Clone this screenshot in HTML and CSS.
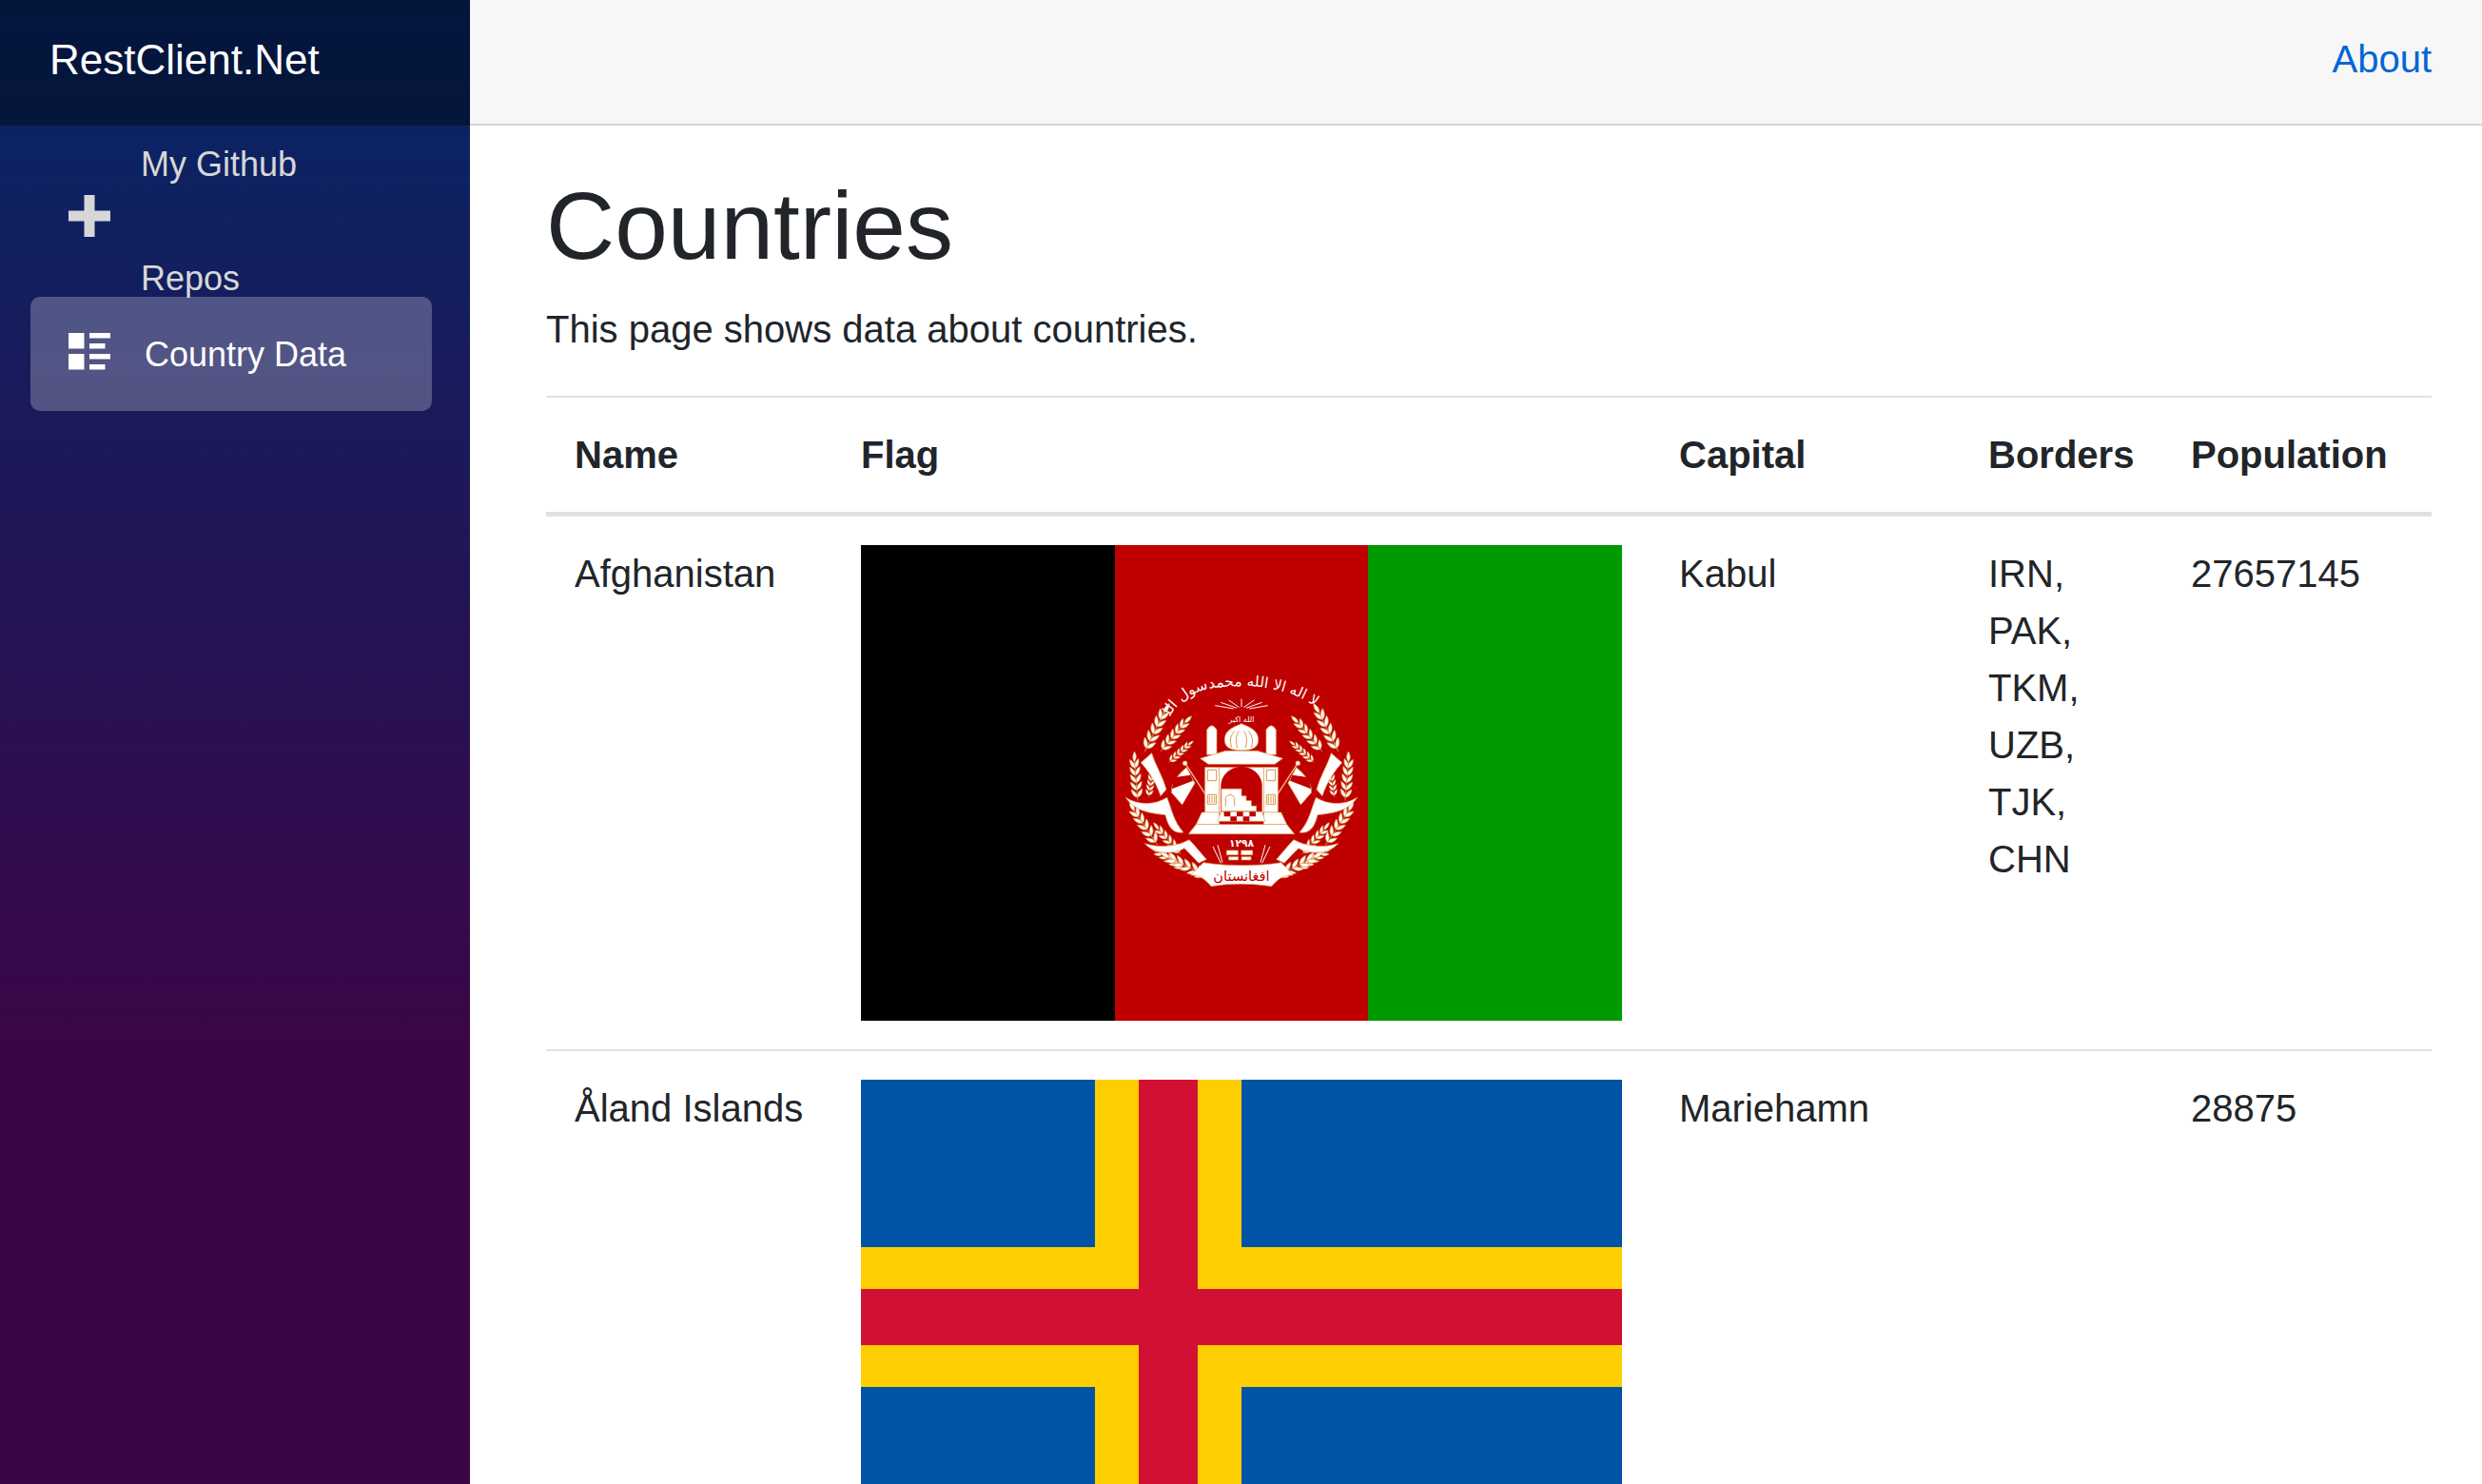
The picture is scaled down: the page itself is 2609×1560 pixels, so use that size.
FILE: index.html
```html
<!DOCTYPE html>
<html lang="en">
<head>
<meta charset="utf-8">
<title>RestClient.Net</title>
<link rel="stylesheet" href="styles.css">
</head>
<body>
<div class="app">
  <aside class="sidebar">
    <div class="brand"><a class="brand-link" href="#">RestClient.Net</a></div>
    <ul class="nav">
      <li class="nav-item">
        <a class="nav-link" href="#">
          <svg class="nav-icon" viewBox="0 0 8 8"><path d="M3 0v3h-3v2h3v3h2v-3h3v-2h-3v-3h-2z"/></svg>
          <span class="nav-text">My Github Repos</span>
        </a>
      </li>
      <li class="nav-item">
        <a class="nav-link active" href="#">
          <svg class="nav-icon" viewBox="0 0 8 8"><path d="M0 0v3h3v-3h-3zm4 0v1h4v-1h-4zm0 2v1h3v-1h-3zm-4 2v3h3v-3h-3zm4 0v1h4v-1h-4zm0 2v1h3v-1h-3z"/></svg>
          <span class="nav-text">Country Data</span>
        </a>
      </li>
    </ul>
  </aside>
  <main class="main">
    <div class="top-row"><a class="about" href="#">About</a></div>
    <div class="content">
      <h1 class="title">Countries</h1>
      <p class="lead">This page shows data about countries.</p>
      <table class="table">
        <thead>
          <tr>
            <th class="col-name">Name</th>
            <th class="col-flag">Flag</th>
            <th class="col-capital">Capital</th>
            <th class="col-borders">Borders</th>
            <th class="col-pop">Population</th>
          </tr>
        </thead>
        <tbody>
          <tr>
            <td class="cell-name">Afghanistan</td>
            <td>
              <svg class="flag flag-af" viewBox="0 0 800 500">
                <defs>
                  <path id="grain" d="M0 0C8-7 9-18 3-30C-4-20-6-8 0 0z"/>
                  <g id="ear">
                    <path class="stem" d="M0 0V-120"/>
                    <use href="#grain" transform="translate(0 -10) rotate(28)"/>
                    <use href="#grain" transform="translate(0 -10) rotate(-28) scale(-1 1)"/>
                    <use href="#grain" transform="translate(0 -32) rotate(28)"/>
                    <use href="#grain" transform="translate(0 -32) rotate(-28) scale(-1 1)"/>
                    <use href="#grain" transform="translate(0 -54) rotate(26)"/>
                    <use href="#grain" transform="translate(0 -54) rotate(-26) scale(-1 1)"/>
                    <use href="#grain" transform="translate(0 -76) rotate(24)"/>
                    <use href="#grain" transform="translate(0 -76) rotate(-24) scale(-1 1)"/>
                    <use href="#grain" transform="translate(0 -98) rotate(20)"/>
                    <use href="#grain" transform="translate(0 -98) rotate(-20) scale(-1 1)"/>
                    <use href="#grain" transform="translate(0 -118)"/>
                  </g>
                  <g id="half">
                    <use href="#ear" transform="translate(100 300) rotate(26) scale(1.15)"/>
                    <use href="#ear" transform="translate(150 300) rotate(40)"/>
                    <use href="#ear" transform="translate(175 335) rotate(48) scale(.7)"/>
                    <use href="#ear" transform="translate(78 455) rotate(-5) scale(1.05)"/>
                    <use href="#ear" transform="translate(112 445) rotate(8) scale(.7)"/>
                    <use href="#ear" transform="translate(140 595) rotate(-34) scale(1.1)"/>
                    <use href="#ear" transform="translate(215 625) rotate(-42) scale(.9)"/>
                    <use href="#ear" transform="translate(225 670) rotate(-58) scale(.85)"/>
                    <use href="#ear" transform="translate(300 695) rotate(-64) scale(1.15)"/>
                    <path class="rib" d="M88 335L122 305C132 340 158 380 168 420L150 440C135 395 110 360 88 335z"/>
                    <path class="rib" d="M40 445C80 470 130 470 170 445C185 480 190 520 222 555C190 560 175 540 165 500C120 495 70 490 40 445z"/>
                    <path class="rib" d="M100 590C150 605 200 600 240 578C262 600 280 625 295 640L270 652C250 630 235 615 225 605C190 625 130 625 100 590z"/>
                    <path class="rib" d="M232 350L258 400L218 468L185 430C183 410 190 385 232 350z"/>
                    <path class="red" d="M191 382L245 374L252 392L186 418z"/>
                    <path class="pole" d="M228 338L296 442"/>
                    <circle class="rib" cx="227" cy="337" r="7"/>
                    <path class="rib" d="M296 232Q311 205 327 232V310H296z"/>
                    <path class="rib" d="M290 350H335V492H290z"/>
                    <path class="detail" d="M298 358H326V392H298zM298 436H326V466H298zM304 440V462M312 440V462M320 440V462"/>
                    <path class="rib" d="M280 492H335V530H262z"/>
                  </g>
                </defs>
                <rect class="af-black" width="267" height="500"/>
                <rect class="af-red" x="267" width="266" height="500"/>
                <rect class="af-green" x="533" width="267" height="500"/>
                <g transform="translate(265 117) scale(.3333)" class="emblem">
                  <use href="#half"/>
                  <use href="#half" transform="translate(810 0) scale(-1 1)"/>
                  <path class="rib" d="M352 262C352 230 385 222 405 212C425 222 458 230 458 262C458 285 445 296 405 296C365 296 352 285 352 262z"/>
                  <path class="detail" d="M375 288C365 265 372 245 385 235M392 288C385 265 390 245 397 235M418 288C425 265 420 245 413 235M435 288C445 265 438 245 425 235"/>
                  <path class="rib" d="M355 298H455L535 322L510 340H300L275 322z"/>
                  <path class="rib" d="M335 350H475V492H335z"/>
                  <path class="red" d="M340 492V410C340 370 375 348 405 348C435 348 470 370 470 410V492z"/>
                  <path class="rib" d="M342 418H405V440H420V455H436V472H452V488H342z"/>
                  <path class="detail" d="M355 472V446Q369 425 383 446V472"/>
                  <path class="rib" d="M340 490H470L480 520H330z"/>
                  <path class="red" d="M350 490h20v15h-20zM390 490h20v15h-20zM430 490h20v15h-20zM370 505h20v15h-20zM410 505h20v15h-20z"/>
                  <path class="rib" d="M262 530H548L572 560H238z"/>
                  <path class="rays" d="M322 155L380 165M340 145L390 163M365 138L398 161M405 134V160M445 138L412 161M470 145L420 163M488 155L430 165"/>
                  <path class="rays" d="M330 595L345 650M315 600L340 652M480 595L465 650M495 600L470 652"/>
                  <path class="rib" d="M358 612h36v14h-36zM404 612h36v14h-36zM365 632h30v10h-30zM405 632h30v10h-30z"/>
                  <path class="rib" d="M245 690L285 650C350 662 470 662 530 650L568 690C530 690 520 705 500 725C430 715 370 715 310 725C290 705 280 690 245 690z"/>
                  <path id="arc-left" class="none" d="M180 190C205 140 250 115 300 102"/>
                  <path id="arc-mid" class="none" d="M300 102C335 96 370 94 410 94"/>
                  <path id="arc-right" class="none" d="M410 94C490 92 590 118 645 165"/>
                  <text class="ar-arc"><textPath href="#arc-right" startOffset="50%">لا اله الا الله</textPath></text>
                  <text class="ar-arc"><textPath href="#arc-mid" startOffset="50%">محمد</textPath></text>
                  <text class="ar-arc"><textPath href="#arc-left" startOffset="50%">رسول الله</textPath></text>
                  <text class="ar-small" x="405" y="206">الله اکبر</text>
                  <text class="ar-year" x="405" y="600">١٢٩٨</text>
                  <text class="ar-name" x="405" y="708">افغانستان</text>
                </g>
              </svg>
            </td>
            <td>Kabul</td>
            <td>IRN, PAK, TKM, UZB, TJK, CHN</td>
            <td>27657145</td>
          </tr>
          <tr class="row-next">
            <td class="cell-name">Åland Islands</td>
            <td>
              <svg class="flag flag-ax" viewBox="0 0 800 523">
                <rect class="ax-blue" width="800" height="523"/>
                <rect class="ax-yellow" x="246" width="154" height="523"/>
                <rect class="ax-yellow" y="176" width="800" height="147"/>
                <rect class="ax-red" x="292" width="62" height="523"/>
                <rect class="ax-red" y="220" width="800" height="59"/>
              </svg>
            </td>
            <td>Mariehamn</td>
            <td></td>
            <td>28875</td>
          </tr>
        </tbody>
      </table>
    </div>
  </main>
</div>
</body>
</html>
```

FILE: styles.css
```css
* { box-sizing: border-box; }
html, body { height: 100%; }
body {
  margin: 0;
  font-family: "Liberation Sans", Arial, sans-serif;
  font-size: 40px;
  line-height: 1.5;
  color: #212529;
  background: #fff;
  overflow: hidden;
}
a { text-decoration: none; }
.app { display: flex; height: 100vh; overflow: hidden; }
.sidebar {
  flex: 0 0 494px;
  background-image: linear-gradient(180deg, rgb(5, 39, 103) 0%, #3a0647 70%);
}
.brand {
  height: 132px;
  display: flex;
  align-items: center;
  padding: 0 0 6px 52px;
  background: rgba(0, 0, 0, 0.4);
}
.brand-link { color: #fff; font-size: 44px; }
.nav { list-style: none; margin: 0; padding: 0; }
.nav-item { padding: 0 40px 20px 32px; font-size: 36px; }
.nav-item:first-child { padding-top: 40px; }
.nav-link {
  display: flex;
  align-items: center;
  height: 120px;
  padding-left: 40px;
  color: #d7d7d7;
  line-height: 120px;
  border-radius: 10px;
}
.nav-link.active { background: rgba(255, 255, 255, 0.25); color: #fff; }
.nav-icon {
  flex: none;
  width: 44px;
  height: 44px;
  margin-right: 32px;
  margin-bottom: 10px;
  fill: currentColor;
}
.active .nav-icon { margin-right: 36px; margin-bottom: 0; }
.nav-text { width: 260px; padding-top: 2px; }
.main { flex: 1; min-width: 0; }
.top-row {
  height: 132px;
  display: flex;
  justify-content: flex-end;
  align-items: center;
  padding: 0 53px 6px 0;
  background: #f7f7f7;
  border-bottom: 2px solid #d6d5d5;
}
.about { color: #0366d6; }
.content { padding: 45px 53px 0 80px; }
.title { margin: 0 0 19px; font-size: 100px; font-weight: 500; line-height: 1.2; }
.lead { margin: 0 0 40px; }
.table { width: 100%; table-layout: fixed; border-collapse: separate; border-spacing: 0; }
.table th, .table td { padding: 30px; text-align: left; vertical-align: top; }
.table th { font-weight: 700; border-top: 2px solid #dee2e6; border-bottom: 5px solid #dee2e6; }
.row-next td { border-top: 2px solid #dee2e6; }
.cell-name { white-space: nowrap; }
.col-name { width: 301px; }
.col-flag { width: 860px; }
.col-capital { width: 325px; }
.col-borders { width: 213px; }
.flag { display: block; width: 800px; }
.flag-af { height: 500px; }
.flag-ax { height: 523px; }
.af-black { fill: #000; }
.af-red { fill: #be0000; }
.af-green { fill: #009900; }
.ax-blue { fill: #0053a5; }
.ax-yellow { fill: #ffce00; }
.ax-red { fill: #d21034; }
#grain { fill: #fff; stroke: #d9954a; stroke-width: 2; }
.stem { fill: none; stroke: #e3a75c; stroke-width: 2; }
.rib { fill: #fff; stroke: #e3a75c; stroke-width: 2; }
.red { fill: #be0000; stroke: none; }
.pole { fill: none; stroke: #f0c48c; stroke-width: 4; }
.detail { fill: none; stroke: #d9954a; stroke-width: 3; }
.rays { fill: none; stroke: #fff; stroke-width: 3; }
.none { fill: none; stroke: none; }
.ar-arc { fill: #fff; font-family: "DejaVu Sans", sans-serif; font-size: 46px; text-anchor: middle; }
.ar-small { fill: #fff; font-family: "DejaVu Sans", sans-serif; font-size: 24px; text-anchor: middle; }
.ar-year { fill: #fff; font-family: "DejaVu Sans", sans-serif; font-size: 32px; font-weight: 700; text-anchor: middle; letter-spacing: 2px; }
.ar-name { fill: #be0000; font-family: "DejaVu Sans", sans-serif; font-size: 44px; text-anchor: middle; }
```
